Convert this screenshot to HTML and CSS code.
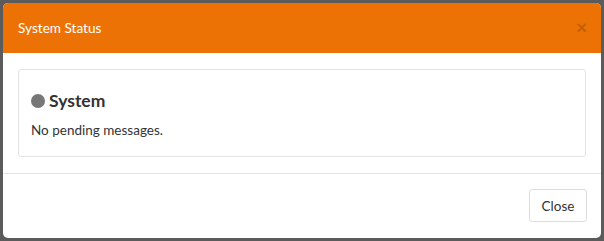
FILE: index.html
```html
<!DOCTYPE html>
<html lang="en">
  <head>
    <meta charset="UTF-8" />
    <title>System Status</title>
    <link rel="stylesheet" href="styles.css">
  </head>
  <body>
    <div class="modal">
      <div class="modal-header">
        <span class="modal-title">System Status</span>
        <button class="close-x">&times;</button>
      </div>

      <div class="modal-body">
        <div class="panel">
          <h4 class="status"><span class="dot"></span>System</h4>
          <p>No pending messages.</p>
        </div>
      </div>

      <div class="modal-footer">
        <button class="btn">Close</button>
      </div>
    </div>
  </body>
</html>
```

FILE: styles.css
```css
body {
  margin: 0;
  background-color: #5b5b5b;
  font-family: Lato, "Noto Sans", sans-serif;
  color: #333;
}

.modal {
  margin: 3px;
  width: 598px;
  height: 235px;
  background-color: #fff;
  border-radius: 5px;
  overflow: hidden;
  display: flex;
  flex-direction: column;
}

.modal-header {
  height: 50px;
  background-color: #ec7205;
  display: flex;
  align-items: center;
  justify-content: space-between;
  padding: 0 14px 0 15px;
}

.modal-title {
  color: #fff;
  font-size: 13.6px;
}

.close-x {
  background: none;
  border: none;
  padding: 0;
  font-family: "Liberation Sans", sans-serif;
  font-size: 19px;
  font-weight: bold;
  line-height: 1;
  color: rgba(0, 0, 0, 0.18);
  margin-top: -2px;
}

.modal-body {
  padding: 16px 15px 16px;
  border-bottom: 1px solid #e5e5e5;
}

.panel {
  height: 86px;
  border: 1px solid #e3e3e3;
  border-radius: 3px;
  padding: 0 12px;
}

.status {
  margin: 20px 0 0;
  font-size: 17.5px;
  font-weight: bold;
  display: flex;
  align-items: center;
  gap: 4px;
  color: #333;
}

.dot {
  width: 14px;
  height: 14px;
  border-radius: 50%;
  background-color: #777;
}

.panel p {
  margin: 11px 0 0;
  font-size: 13.5px;
}

.modal-footer {
  flex: 1;
  display: flex;
  justify-content: flex-end;
  align-items: flex-start;
  padding: 15px 14px 0;
}

.btn {
  width: 58px;
  height: 33px;
  background-color: #fff;
  border: 1px solid #ddd;
  border-radius: 3px;
  font-family: Lato, "Noto Sans", sans-serif;
  font-size: 13.5px;
  color: #333;
  cursor: pointer;
}
```
